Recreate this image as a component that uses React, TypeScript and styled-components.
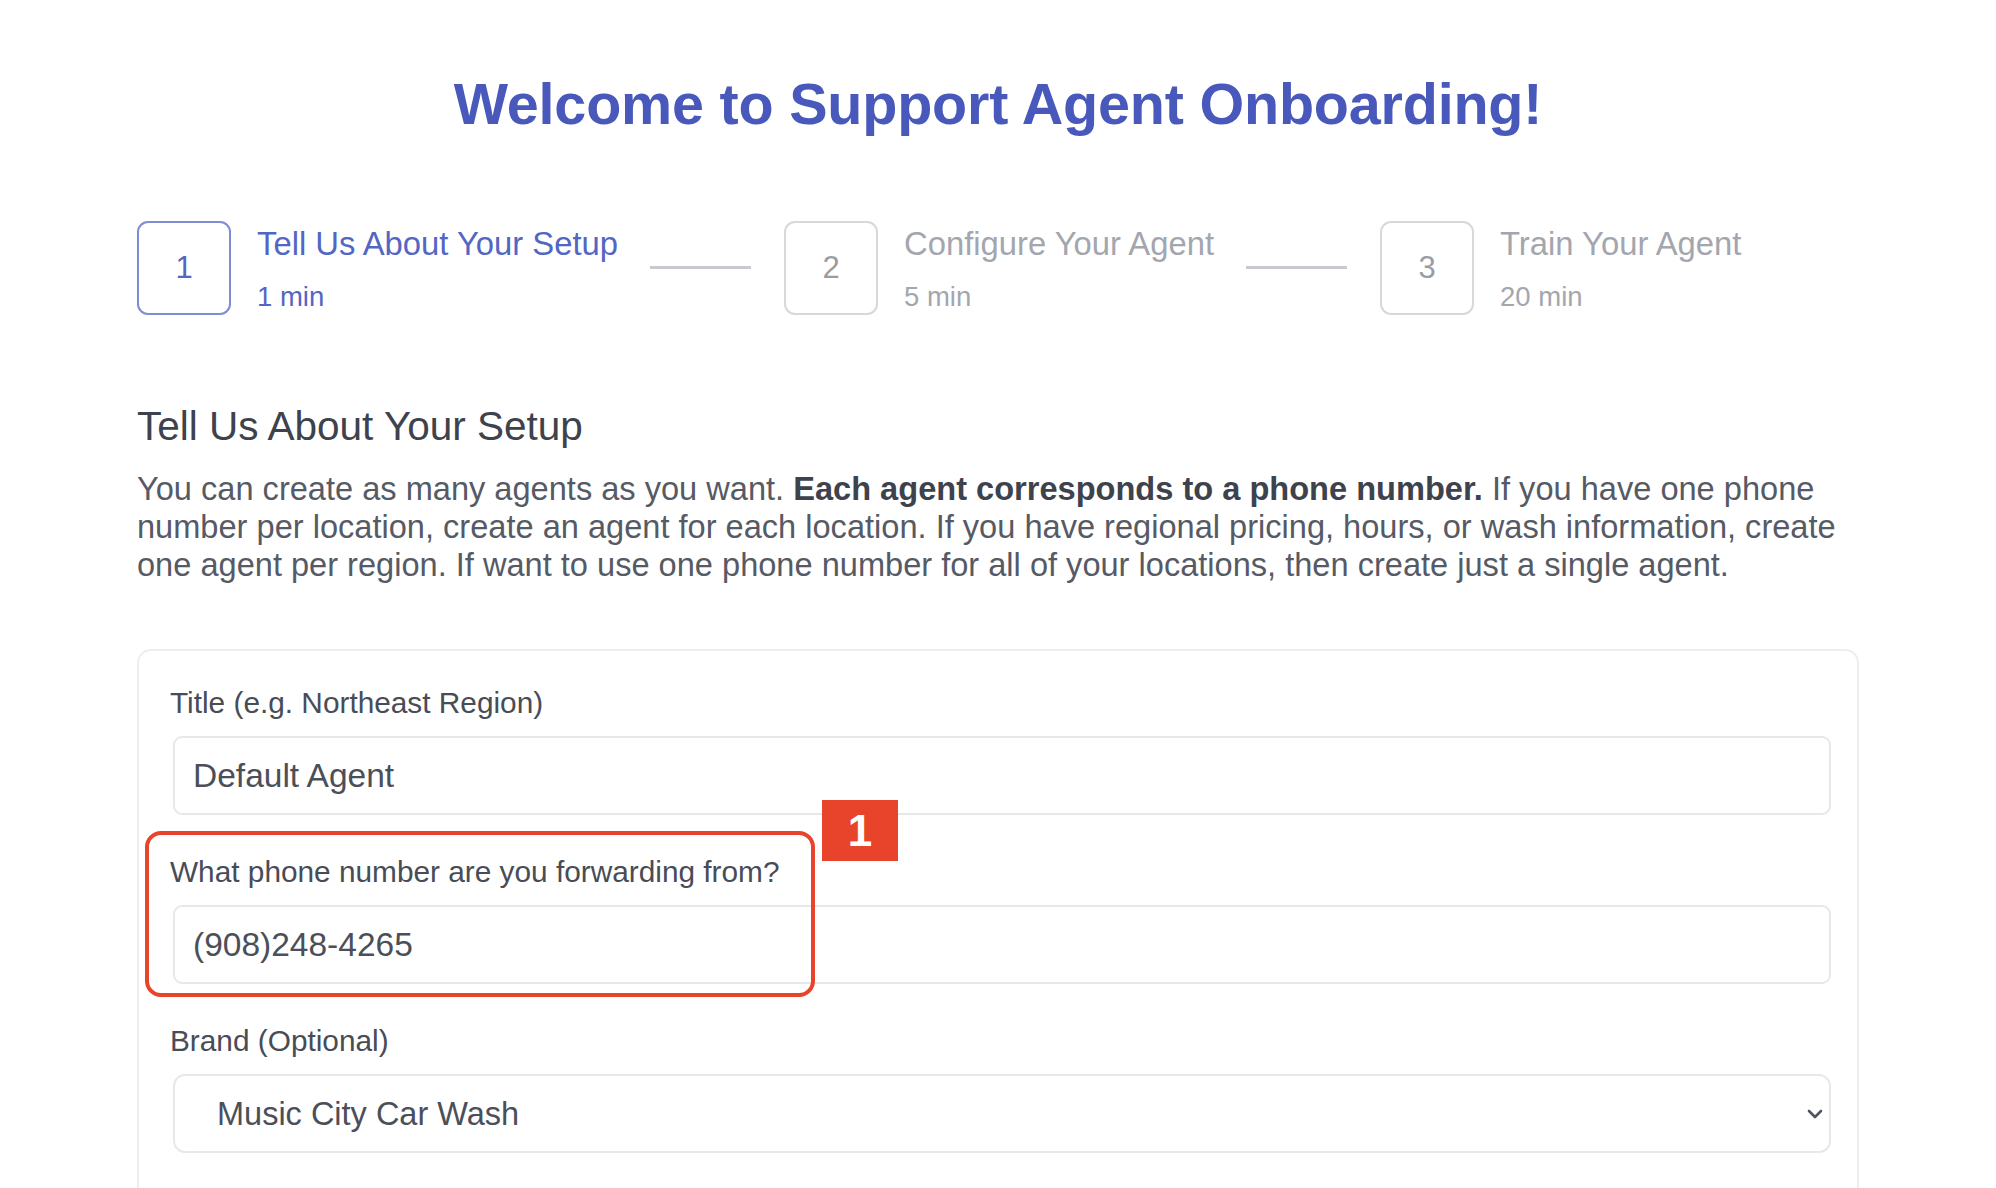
import styled, { createGlobalStyle } from 'styled-components';

const GlobalStyle = createGlobalStyle`
  html, body {
    margin: 0;
    padding: 0;
    background: #ffffff;
  }
  body {
    font-family: 'Liberation Sans', Arial, Helvetica, sans-serif;
    color: #4b4f5a;
  }
`;

interface Step {
  num: number;
  title: string;
  time: string;
}

const steps: Step[] = [
  { num: 1, title: 'Tell Us About Your Setup', time: '1 min' },
  { num: 2, title: 'Configure Your Agent', time: '5 min' },
  { num: 3, title: 'Train Your Agent', time: '20 min' },
];

const Page = styled.div`
  width: 1722px;
  margin: 0 auto;
  padding-top: 70px;
  box-sizing: border-box;
  height: 1188px;
  overflow: hidden;
`;

const Title = styled.h1`
  margin: 0;
  text-align: center;
  font-size: 57.5px;
  line-height: 68px;
  font-weight: 700;
  color: #4858bb;
  letter-spacing: -0.2px;
`;

const Stepper = styled.div`
  display: flex;
  align-items: flex-start;
  margin-top: 83px;
`;

const StepItem = styled.div`
  display: flex;
  align-items: flex-start;
  gap: 26px;
`;

const StepBox = styled.div<{ $active: boolean }>`
  width: 94px;
  height: 94px;
  box-sizing: border-box;
  border: 2px solid ${(p) => (p.$active ? '#7f8cd3' : '#d7d8dc')};
  border-radius: 11px;
  display: flex;
  align-items: center;
  justify-content: center;
  font-size: 31px;
  color: ${(p) => (p.$active ? '#5466c2' : '#9a9ca4')};
`;

const StepText = styled.div<{ $active: boolean }>`
  display: flex;
  flex-direction: column;
  padding-top: 4px;
  color: ${(p) => (p.$active ? '#5366c4' : '#a3a6ae')};
`;

const StepTitle = styled.div`
  font-size: 32.8px;
  line-height: 38px;
`;

const StepTime = styled.div`
  margin-top: 18px;
  font-size: 27.5px;
  line-height: 32px;
`;

const Connector = styled.div`
  width: 101px;
  height: 3px;
  background: #c9cad0;
  margin: 45px 7px 0 32px;
`;

const SectionTitle = styled.h2`
  margin: 88px 0 0;
  font-size: 40.5px;
  line-height: 46px;
  font-weight: 400;
  color: #3e424c;
`;

const Intro = styled.p`
  margin: 21px 0 0;
  font-size: 32.6px;
  line-height: 38px;
  color: #565a65;

  strong {
    color: #3e424c;
    font-weight: 700;
  }
`;

const Card = styled.div`
  margin-top: 65px;
  border: 2px solid #eeeef0;
  border-bottom: none;
  border-radius: 14px 14px 0 0;
  padding: 35px 26px 60px 31px;
`;

const Field = styled.div`
  position: relative;
  margin-bottom: 40px;
`;

const Label = styled.label`
  display: block;
  font-size: 29.8px;
  line-height: 34px;
  color: #484c57;
  margin-bottom: 16px;
`;

const TextInput = styled.input`
  display: block;
  box-sizing: border-box;
  width: calc(100% - 3px);
  margin-left: 3px;
  height: 79px;
  padding: 0 18px;
  border: 2px solid #e7e8eb;
  border-radius: 9px;
  font-family: inherit;
  font-size: 33.5px;
  color: #4b4f59;
  background: #fff;
  outline: none;
`;

const SelectWrap = styled.div`
  position: relative;
  margin-left: 3px;
`;

const Select = styled.select`
  display: block;
  box-sizing: border-box;
  width: 100%;
  height: 79px;
  padding: 0 60px 0 42px;
  border: 2px solid #e7e8eb;
  border-radius: 12px;
  font-family: inherit;
  font-size: 32.5px;
  color: #4b4f59;
  background: #fff;
  appearance: none;
  outline: none;
`;

const Chevron = styled.svg`
  position: absolute;
  right: 7px;
  top: 50%;
  margin-top: -8px;
  width: 18px;
  height: 16px;
  pointer-events: none;
`;

const Highlight = styled.div`
  position: absolute;
  left: -25px;
  top: -24px;
  width: 670px;
  height: 166px;
  box-sizing: border-box;
  border: 4px solid #e8432b;
  border-radius: 16px;
  pointer-events: none;
`;

const Badge = styled.div`
  position: absolute;
  left: 652px;
  top: -55px;
  width: 76px;
  height: 61px;
  background: #e8432b;
  color: #ffffff;
  font-size: 44px;
  font-weight: 700;
  display: flex;
  align-items: center;
  justify-content: center;
`;

export default function App() {
  return (
    <>
      <GlobalStyle />
      <Page>
        <Title>Welcome to Support Agent Onboarding!</Title>

        <Stepper>
          {steps.map((s, i) => (
            <StepItem key={s.num}>
              {i > 0 && <Connector />}
              <StepBox $active={i === 0}>{s.num}</StepBox>
              <StepText $active={i === 0}>
                <StepTitle>{s.title}</StepTitle>
                <StepTime>{s.time}</StepTime>
              </StepText>
            </StepItem>
          ))}
        </Stepper>

        <SectionTitle>Tell Us About Your Setup</SectionTitle>
        <Intro>
          You can create as many agents as you want.{' '}
          <strong>Each agent corresponds to a phone number.</strong> If you have
          one phone number per location, create an agent for each location. If
          you have regional pricing, hours, or wash information, create one
          agent per region. If want to use one phone number for all of your
          locations, then create just a single agent.
        </Intro>

        <Card>
          <Field>
            <Label>Title (e.g. Northeast Region)</Label>
            <TextInput defaultValue='Default Agent' />
          </Field>

          <Field>
            <Label>What phone number are you forwarding from?</Label>
            <TextInput defaultValue='(908)248-4265' />
            <Highlight />
            <Badge>1</Badge>
          </Field>

          <Field>
            <Label>Brand (Optional)</Label>
            <SelectWrap>
              <Select defaultValue='mccw'>
                <option value='mccw'>Music City Car Wash</option>
              </Select>
              <Chevron viewBox='0 0 18 16'>
                <path
                  d='M3 5 L9 11 L15 5'
                  fill='none'
                  stroke='#4f535d'
                  strokeWidth='2.6'
                  strokeLinecap='round'
                  strokeLinejoin='round'
                />
              </Chevron>
            </SelectWrap>
          </Field>
        </Card>
      </Page>
    </>
  );
}
